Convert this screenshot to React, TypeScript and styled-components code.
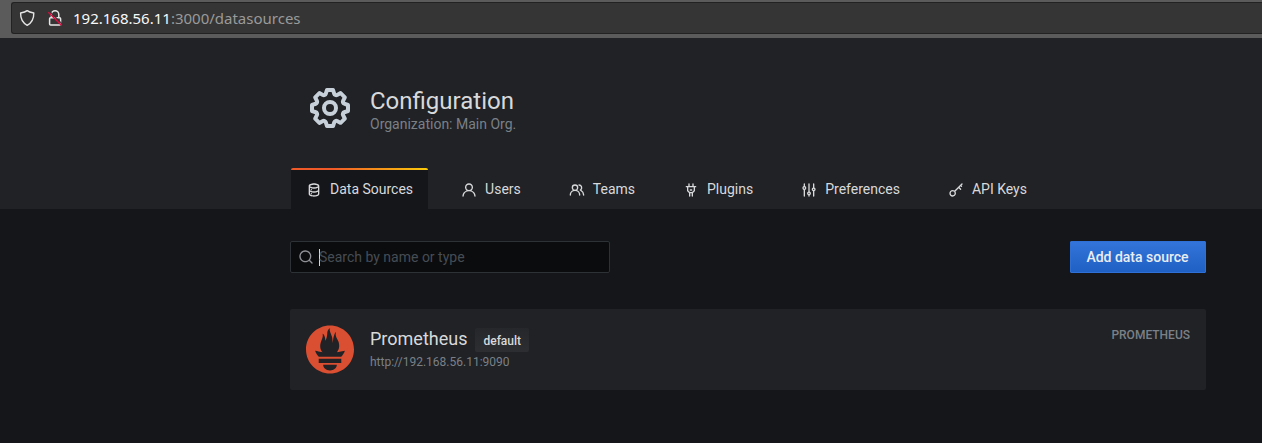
import React from "react";
import styled, { createGlobalStyle } from "styled-components";
import { SiPrometheus } from "react-icons/si";

const GlobalStyle = createGlobalStyle`
  *, *::before, *::after { box-sizing: border-box; }
  body {
    margin: 0;
    background: #15161a;
    color: #d8d9da;
    font: 14px/20px Roboto, "Liberation Sans", sans-serif;
    overflow: hidden;
  }
`;

const Page = styled.div`
  height: 443px;
  overflow: hidden;
`;

const BrowserBar = styled.div`
  height: 38px;
  padding: 2px 0 4px 11px;
  background: #5b5b5b;
`;

const AddressField = styled.div`
  display: flex;
  align-items: center;
  height: 32px;
  padding-left: 7px;
  border: 1px solid #222;
  border-right: 0;
  border-radius: 3px 0 0 3px;
  background: #353535;
`;

const ShieldIcon = styled.svg`
  width: 18px;
  height: 18px;
  margin-right: 9px;
`;

const LockIcon = styled.svg`
  width: 18px;
  height: 18px;
  margin-right: 9px;
`;

const Url = styled.span`
  font: 15px/20px "Noto Sans", sans-serif;
  color: #9a9a9a;
  white-space: nowrap;
`;

const UrlHost = styled.span`
  color: #f9f9fa;
`;

const Container = styled.div`
  width: 916px;
  margin-left: 290px;
`;

const Header = styled.header`
  height: 171px;
  background: #202226;
`;

const HeaderInner = styled(Container)`
  display: flex;
  flex-direction: column;
  justify-content: space-between;
  height: 100%;
  padding-top: 46px;
`;

const Heading = styled.div`
  display: flex;
  gap: 16px;
  padding-left: 16px;
`;

const HeadingText = styled.div`
  padding-top: 3px;
`;

const Title = styled.h1`
  margin: 0;
  font-size: 24px;
  line-height: 29px;
  font-weight: 400;
`;

const Subtitle = styled.div`
  margin-top: -1px;
  line-height: 18px;
  color: #7b8087;
`;

const Glyph = styled.svg<{ $size: number; $color?: string }>`
  flex: none;
  width: ${(p) => p.$size}px;
  height: ${(p) => p.$size}px;
  fill: ${(p) => p.$color ?? "#d8d9da"};
`;

const Tabs = styled.nav`
  display: flex;
  gap: 16px;
  padding-left: 1px;
`;

const Tab = styled.a<{ $active?: boolean }>`
  display: flex;
  align-items: center;
  gap: 8px;
  height: 41px;
  padding: 1px 16px 0;
  color: #d8d9da;
  white-space: nowrap;

  svg {
    margin-top: 1px;
  }

  ${(p) =>
    p.$active &&
    `
    margin-right: 1px;
    padding: 1px 15px 0;
    border-radius: 2px 2px 0 0;
    background: linear-gradient(to right, #f05a28 30%, #fbca0a 99%) top / 100% 2px no-repeat, #15161a;
  `}
`;

const Content = styled(Container)`
  padding-top: 32px;
`;

const ActionBar = styled.div`
  display: flex;
  justify-content: space-between;
  margin-bottom: 36px;
`;

const SearchField = styled.div`
  display: flex;
  align-items: center;
  width: 320px;
  height: 32px;
  padding-left: 7px;
  border: 1px solid #2c3235;
  border-radius: 2px;
  background: #0b0c0e;
`;

const Caret = styled.span`
  width: 1px;
  height: 17px;
  margin-left: 5px;
  background: #d8d9da;
`;

const Placeholder = styled.span`
  margin-left: -1px;
  color: #464c54;
`;

const PrimaryButton = styled.button`
  width: 136px;
  height: 32px;
  padding: 0 1px 0 0;
  border: 1px solid #2f70d6;
  border-radius: 1px;
  background: linear-gradient(#3274d9, #1f60c4);
  color: #e9edf2;
  font: 500 14px/30px Roboto, sans-serif;
`;

const Card = styled.article`
  display: flex;
  height: 81px;
  padding: 16px;
  border-radius: 2px;
  background: #202226;
`;

const Logo = styled(SiPrometheus)`
  width: 48px;
  height: 49px;
  margin-right: 16px;
  color: #da4e31;
`;

const CardBody = styled.div`
  flex: 1;
`;

const CardTitle = styled.div`
  display: flex;
  gap: 8px;
  height: 28px;
  font-size: 18px;
  line-height: 27px;
`;

const Badge = styled.span`
  height: 24px;
  margin-top: 3px;
  padding: 1px 8px 0;
  border-radius: 2px;
  background: linear-gradient(#26272b, #2d2e31);
  font-size: 12px;
  line-height: 24px;
  font-weight: 500;
`;

const CardUrl = styled.div`
  font-size: 12px;
  line-height: 18px;
  color: #7b8087;
`;

const CardType = styled.div`
  padding-top: 1px;
  font-size: 12px;
  line-height: 18px;
  font-weight: 500;
  color: #7b8087;
`;

const paths = {
  cog: "M21.32,9.55l-1.89-.63.89-1.78A1,1,0,0,0,20.13,6L18,3.87a1,1,0,0,0-1.15-.19l-1.78.89-.63-1.89A1,1,0,0,0,13.5,2h-3a1,1,0,0,0-.95.68L8.92,4.57,7.14,3.68A1,1,0,0,0,6,3.87L3.87,6a1,1,0,0,0-.19,1.15l.89,1.78-1.89.63A1,1,0,0,0,2,10.5v3a1,1,0,0,0,.68.95l1.89.63-.89,1.78A1,1,0,0,0,3.87,18L6,20.13a1,1,0,0,0,1.15.19l1.78-.89.63,1.89a1,1,0,0,0,.95.68h3a1,1,0,0,0,.95-.68l.63-1.89,1.78.89A1,1,0,0,0,18,20.13L20.13,18a1,1,0,0,0,.19-1.15l-.89-1.78,1.89-.63A1,1,0,0,0,22,13.5v-3A1,1,0,0,0,21.32,9.55ZM20,12.78l-1.2.4A2,2,0,0,0,17.64,16l.57,1.14-1.1,1.1L16,17.64a2,2,0,0,0-2.79,1.16l-.4,1.2H11.22l-.4-1.2A2,2,0,0,0,8,17.64l-1.14.57-1.1-1.1L6.36,16A2,2,0,0,0,5.2,13.18L4,12.78V11.22l1.2-.4A2,2,0,0,0,6.36,8L5.79,6.89l1.1-1.1L8,6.36A2,2,0,0,0,10.82,5.2l.4-1.2h1.56l.4,1.2A2,2,0,0,0,16,6.36l1.14-.57,1.1,1.1L17.64,8a2,2,0,0,0,1.16,2.79l1.2.4ZM12,8a4,4,0,1,0,4,4A4,4,0,0,0,12,8Zm0,6a2,2,0,1,1,2-2A2,2,0,0,1,12,14Z",
  database:
    "M8,16.5a1,1,0,1,0,1,1A1,1,0,0,0,8,16.5ZM12,2C8,2,4,3.37,4,6V18c0,2.63,4,4,8,4s8-1.37,8-4V6C20,3.37,16,2,12,2Zm6,16c0,.71-2.28,2-6,2s-6-1.29-6-2V14.73A13.16,13.16,0,0,0,12,16a13.16,13.16,0,0,0,6-1.27Zm0-6c0,.71-2.28,2-6,2s-6-1.29-6-2V8.73A13.16,13.16,0,0,0,12,10a13.16,13.16,0,0,0,6-1.27ZM12,8C8.28,8,6,6.71,6,6s2.28-2,6-2,6,1.29,6,2S15.72,8,12,8ZM8,10.5a1,1,0,1,0,1,1A1,1,0,0,0,8,10.5Z",
  user: "M15.71,12.71a6,6,0,1,0-7.42,0,10,10,0,0,0-6.22,8.18,1,1,0,0,0,2,.22,8,8,0,0,1,15.9,0,1,1,0,0,0,1,.89h.11a1,1,0,0,0,.88-1.1A10,10,0,0,0,15.71,12.71ZM12,12a4,4,0,1,1,4-4A4,4,0,0,1,12,12Z",
  users:
    "M12.3,12.22A4.92,4.92,0,0,0,14,8.5a5,5,0,0,0-10,0,4.92,4.92,0,0,0,1.7,3.72A8,8,0,0,0,1,19.5a1,1,0,0,0,2,0,6,6,0,0,1,12,0,1,1,0,0,0,2,0A8,8,0,0,0,12.3,12.22ZM9,11.5a3,3,0,1,1,3-3A3,3,0,0,1,9,11.5Zm9.74.32A5,5,0,0,0,15,3.5a1,1,0,0,0,0,2,3,3,0,0,1,3,3,3,3,0,0,1-1.5,2.59,1,1,0,0,0-.5.84,1,1,0,0,0,.45.86l.39.26.13.07a7,7,0,0,1,4,6.38,1,1,0,0,0,2,0A9,9,0,0,0,18.74,11.82Z",
  plug: "M19,6H16V3a1,1,0,0,0-2,0V6H10V3A1,1,0,0,0,8,3V6H5A1,1,0,0,0,5,8H6v5a1,1,0,0,0,.29.71L9,16.41V21a1,1,0,0,0,2,0V17h2v4a1,1,0,0,0,2,0V16.41l2.71-2.7A1,1,0,0,0,18,13V8h1a1,1,0,0,0,0-2Zm-3,6.59L13.59,15H10.41L8,12.59V8h8ZM11,13h2a1,1,0,0,0,0-2H11a1,1,0,0,0,0,2Z",
  sliders:
    "M20,8.18V3a1,1,0,0,0-2,0V8.18a3,3,0,0,0,0,5.64V21a1,1,0,0,0,2,0V13.82a3,3,0,0,0,0-5.64ZM19,12a1,1,0,1,1,1-1A1,1,0,0,1,19,12Zm-6,2.18V3a1,1,0,0,0-2,0V14.18a3,3,0,0,0,0,5.64V21a1,1,0,0,0,2,0V19.82a3,3,0,0,0,0-5.64ZM12,18a1,1,0,1,1,1-1A1,1,0,0,1,12,18ZM6,6.18V3A1,1,0,0,0,4,3V6.18a3,3,0,0,0,0,5.64V21a1,1,0,0,0,2,0V11.82A3,3,0,0,0,6,6.18ZM5,10A1,1,0,1,1,6,9,1,1,0,0,1,5,10Z",
  key: "M21.71,2.29a1,1,0,0,0-1.42,0L9.75,12.83a5,5,0,1,0,1.42,1.42l4.88-4.88,2.12,2.12a1,1,0,0,0,1.42-1.42L17.46,7.95l1.42-1.41.7.7A1,1,0,0,0,21,5.83l-.71-.71,1.42-1.41A1,1,0,0,0,21.71,2.29ZM7,20a3,3,0,1,1,3-3A3,3,0,0,1,7,20Z",
  search:
    "M21.71,20.29,18,16.61A9,9,0,1,0,16.61,18l3.68,3.68a1,1,0,0,0,1.42,0A1,1,0,0,0,21.71,20.29ZM11,18a7,7,0,1,1,7-7A7,7,0,0,1,11,18Z",
};

type IconName = keyof typeof paths;

function Icon({ name, size = 16, color }: { name: IconName; size?: number; color?: string }) {
  return (
    <Glyph viewBox="0 0 24 24" $size={size} $color={color} aria-hidden>
      <path d={paths[name]} />
    </Glyph>
  );
}

const tabs: { label: string; icon: IconName }[] = [
  { label: "Data Sources", icon: "database" },
  { label: "Users", icon: "user" },
  { label: "Teams", icon: "users" },
  { label: "Plugins", icon: "plug" },
  { label: "Preferences", icon: "sliders" },
  { label: "API Keys", icon: "key" },
];

export default function App() {
  return (
    <Page>
      <GlobalStyle />
      <BrowserBar>
        <AddressField>
          <ShieldIcon viewBox="0 0 18 18" fill="none" stroke="#e6e6e6" strokeWidth="1.4" strokeLinejoin="round">
            <path d="M8.2 1.6C6.7 2.7 4.5 3.4 1.6 4C1.5 9.5 3 13.5 8.2 16.3C13.4 13.5 14.9 9.5 14.8 4C11.9 3.4 9.7 2.7 8.2 1.6Z" />
          </ShieldIcon>
          <LockIcon viewBox="0 0 18 18" fill="none" stroke="#e6e6e6" strokeWidth="1.5">
            <path d="M5.4 8.5V5.4a3.7 3.7 0 0 1 7.4 0V8.5" />
            <rect x="3.6" y="8.7" width="11" height="7.3" rx="1" />
            <path d="M3.4 2.2L16.6 15.4" stroke="#353535" strokeWidth="1.2" />
            <path d="M2.4 3.2L15.7 16.5" stroke="#e2093f" strokeWidth="1.4" />
          </LockIcon>
          <Url>
            <UrlHost>192.168.56.11</UrlHost>:3000/datasources
          </Url>
        </AddressField>
      </BrowserBar>
      <Header>
        <HeaderInner>
          <Heading>
            <Icon name="cog" size={48} color="#c7d0d9" />
            <HeadingText>
              <Title>Configuration</Title>
              <Subtitle>Organization: Main Org.</Subtitle>
            </HeadingText>
          </Heading>
          <Tabs>
            {tabs.map((tab, i) => (
              <Tab key={tab.label} $active={i === 0}>
                <Icon name={tab.icon} />
                {tab.label}
              </Tab>
            ))}
          </Tabs>
        </HeaderInner>
      </Header>
      <Content>
        <ActionBar>
          <SearchField>
            <Icon name="search" color="#8e9096" />
            <Caret />
            <Placeholder>Search by name or type</Placeholder>
          </SearchField>
          <PrimaryButton>Add data source</PrimaryButton>
        </ActionBar>
        <Card>
          <Logo />
          <CardBody>
            <CardTitle>
              Prometheus
              <Badge>default</Badge>
            </CardTitle>
            <CardUrl>http://192.168.56.11:9090</CardUrl>
          </CardBody>
          <CardType>PROMETHEUS</CardType>
        </Card>
      </Content>
    </Page>
  );
}
